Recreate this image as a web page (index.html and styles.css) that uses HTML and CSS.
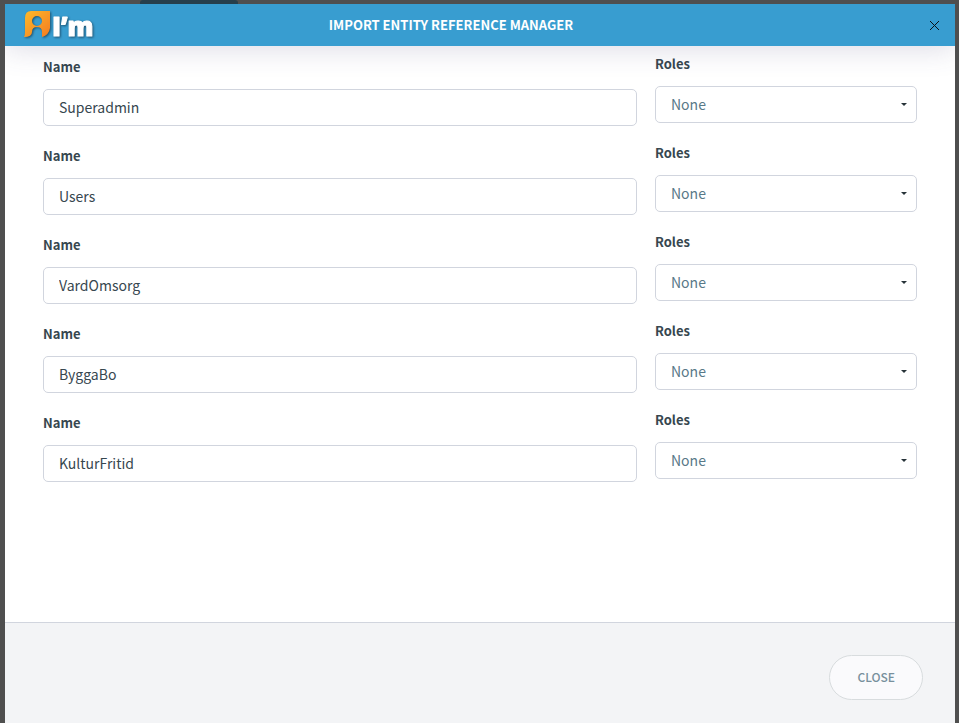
FILE: index.html
```html
<!DOCTYPE html>
<html lang="en">
<head>
<meta charset="utf-8">
<meta name="viewport" content="width=device-width, initial-scale=1">
<title>Import Entity Reference Manager</title>
<link rel="stylesheet" href="styles.css">
</head>
<body>
<div class="active-tab"></div>
<div class="dialog" role="dialog" aria-labelledby="dialog-title">
  <header class="dialog-header">
    <svg class="logo" width="78" height="40" viewBox="0 -4 78 40" role="img" aria-label="I'm">
      <defs>
        <linearGradient id="amber" x1="0" y1="0" x2="1" y2="1">
          <stop offset="0" stop-color="#fdbb2b"/>
          <stop offset="1" stop-color="#f47b20"/>
        </linearGradient>
      </defs>
      <g class="logo-art">
        <path fill="url(#amber)" fill-rule="evenodd" d="M7 2H26V19Q25 26 18 28V23Q18 18 13 18Q8 18 8 23Q8 28 0 28Q1 26 1 23V9Q1 2 7 2ZM13 7A5 5 0 1 0 13 17A5 5 0 1 0 13 7Z"/>
        <text class="logo-text" x="28" y="27">I’m</text>
      </g>
    </svg>
    <h1 class="dialog-title" id="dialog-title">IMPORT ENTITY REFERENCE MANAGER</h1>
    <button class="dismiss" type="button" aria-label="Dismiss">
      <svg width="11" height="11" viewBox="0 0 11 11"><path d="M1 1L10 10M10 1L1 10" fill="none" stroke="#0a1216" stroke-width="1"/></svg>
    </button>
  </header>
  <main class="dialog-body">
    <div class="row">
      <div class="field name-field"><label for="name1">Name</label><input class="control" id="name1" type="text" value="Superadmin"></div>
      <div class="field"><label for="role1">Roles</label><div class="picker"><select class="control" id="role1"><option>None</option></select></div></div>
    </div>
    <div class="row">
      <div class="field name-field"><label for="name2">Name</label><input class="control" id="name2" type="text" value="Users"></div>
      <div class="field"><label for="role2">Roles</label><div class="picker"><select class="control" id="role2"><option>None</option></select></div></div>
    </div>
    <div class="row">
      <div class="field name-field"><label for="name3">Name</label><input class="control" id="name3" type="text" value="VardOmsorg"></div>
      <div class="field"><label for="role3">Roles</label><div class="picker"><select class="control" id="role3"><option>None</option></select></div></div>
    </div>
    <div class="row">
      <div class="field name-field"><label for="name4">Name</label><input class="control" id="name4" type="text" value="ByggaBo"></div>
      <div class="field"><label for="role4">Roles</label><div class="picker"><select class="control" id="role4"><option>None</option></select></div></div>
    </div>
    <div class="row">
      <div class="field name-field"><label for="name5">Name</label><input class="control" id="name5" type="text" value="KulturFritid"></div>
      <div class="field"><label for="role5">Roles</label><div class="picker"><select class="control" id="role5"><option>None</option></select></div></div>
    </div>
  </main>
  <footer class="dialog-footer">
    <button class="close-button" type="button">CLOSE</button>
  </footer>
</div>
</body>
</html>
```

FILE: styles.css
```css
* {
  box-sizing: border-box;
}

body {
  margin: 0;
  min-height: 100vh;
  padding: 4px 4px 0 5px;
  display: flex;
  background: #4f4f4f;
  color: #37474f;
  font-family: "Noto Sans CJK SC", "Noto Sans", sans-serif;
  font-size: 14px;
  line-height: 20px;
}

/* Edge of the page's selected tab, showing above the dialog */
.active-tab {
  position: absolute;
  top: 0;
  left: 140px;
  width: 98px;
  height: 4px;
  border-radius: 3px 3px 0 0;
  background: #263f4c;
}

.dialog {
  flex: 1;
  min-width: 0;
  display: flex;
  flex-direction: column;
  background: #fff;
}

.dialog-header {
  display: grid;
  grid-template-columns: 80px 1fr 143px;
  align-items: center;
  height: 42px;
  padding: 0 14px 0 19px;
  background: #389dd0;
  box-shadow: 0 1px 30px 1px rgba(69, 65, 120, 0.2);
  clip-path: inset(0 0 -50px 0);
}

.logo {
  display: block;
  overflow: visible;
}

.logo-art {
  filter: drop-shadow(1px 1px 1px rgba(20, 50, 70, 0.7));
}

.logo-text {
  fill: #fff;
  stroke: #fff;
  stroke-width: 1;
  stroke-linejoin: round;
  font-family: "Open Sans", sans-serif;
  font-size: 26px;
  font-weight: 800;
}

.dialog-title {
  margin: 0;
  color: #fff;
  font-size: 13px;
  font-weight: 700;
  text-align: center;
}

.dismiss {
  justify-self: end;
  display: flex;
  padding: 1px;
  border: 0;
  background: none;
}

.dialog-body {
  flex: 1;
  padding: 8px 38px;
}

.row {
  display: grid;
  grid-template-columns: 594fr 262fr;
  gap: 18px;
  height: 89px;
}

.field label {
  display: block;
  margin-bottom: 12px;
  font-size: 13px;
  font-weight: 700;
}

.name-field {
  padding-top: 3px;
}

.control {
  display: block;
  width: 100%;
  height: 37px;
  margin: 0;
  padding: 0 15px 2px;
  border: 1px solid #d1d5de;
  border-radius: 5px;
  background: #fff;
  color: #37474f;
  font: inherit;
}

.picker {
  position: relative;
}

.picker select {
  appearance: none;
  color: #587988;
}

.picker::after {
  content: "";
  position: absolute;
  top: 17px;
  right: 10px;
  border: 3px solid transparent;
  border-top-color: #263238;
  border-bottom: 0;
  pointer-events: none;
}

.dialog-footer {
  display: flex;
  justify-content: flex-end;
  padding: 32px 32px 23px;
  border-top: 1px solid #d1d5de;
  background: #f3f4f6;
}

.close-button {
  height: 45px;
  padding: 0 27px 2px;
  border: 1px solid #d8dcde;
  border-radius: 23px;
  background: #fafafc;
  color: #78909c;
  font: inherit;
  font-size: 12px;
  font-weight: 500;
}
```
